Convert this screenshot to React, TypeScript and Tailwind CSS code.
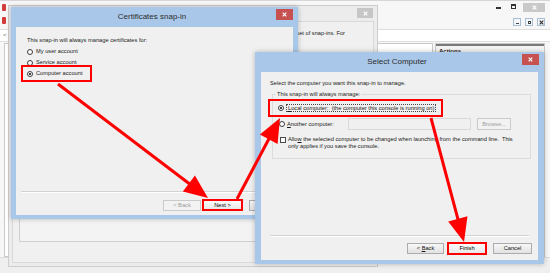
import type { ReactNode } from 'react'

function Radio({ checked = false }: { checked?: boolean }) {
  return (
    <span className="flex h-[6px] w-[6px] shrink-0 items-center justify-center rounded-full border border-[#3c3c3c] bg-white">
      {checked && <span className="h-[2px] w-[2px] rounded-full bg-black" />}
    </span>
  )
}

function CloseGlyph({ color = 'white' }: { color?: string }) {
  return (
    <svg width="5" height="5" viewBox="0 0 5 5">
      <path d="M0.7 0.7 L4.3 4.3 M4.3 0.7 L0.7 4.3" stroke={color} strokeWidth="1.2" />
    </svg>
  )
}

function Btn({ label, disabled = false, className = '' }: { label: ReactNode; disabled?: boolean; className?: string }) {
  return (
    <div
      className={`flex h-[11px] shrink-0 items-center justify-center border text-[5.7px] ${
        disabled
          ? 'border-[#cacaca] bg-[#f2f2f2] text-[#9d9d9d]'
          : 'border-[#acacac] bg-gradient-to-b from-[#f7f7f7] to-[#e2e2e2] text-[#111]'
      } ${className}`}
    >
      {label}
    </div>
  )
}

function Dialog({ title, className, children }: { title: string; className: string; children: ReactNode }) {
  return (
    <div className={`absolute flex flex-col bg-[#a9c8e9] shadow-[0_0_5px_rgba(0,0,0,0.25)] ${className}`}>
      <div className="flex h-[20px] shrink-0 items-start">
        <div className="flex-1" />
        <div className="self-center text-[8px] text-[#2b2b2b]">{title}</div>
        <div className="flex flex-1 justify-end pr-[5px] pt-[2px]">
          <div className="flex h-[11px] w-[17px] items-center justify-center bg-[#c75050]">
            <CloseGlyph />
          </div>
        </div>
      </div>
      {children}
    </div>
  )
}

function Arrows() {
  const arrows = [
    { x1: 58, y1: 84, x2: 208, y2: 198 },
    { x1: 237, y1: 199, x2: 280, y2: 118 },
    { x1: 431, y1: 118, x2: 464, y2: 242 },
  ]
  return (
    <svg className="pointer-events-none absolute left-0 top-0" width="550" height="273">
      {arrows.map((a, i) => {
        const dx = a.x2 - a.x1
        const dy = a.y2 - a.y1
        const len = Math.hypot(dx, dy)
        const ux = dx / len
        const uy = dy / len
        const L = 24
        const W = 10
        const bx = a.x2 - ux * L
        const by = a.y2 - uy * L
        const pts = `${a.x2},${a.y2} ${bx - uy * W},${by + ux * W} ${bx + uy * W},${by - ux * W}`
        return (
          <g key={i}>
            <line x1={a.x1} y1={a.y1} x2={bx + ux * 3} y2={by + uy * 3} stroke="#ff0000" strokeWidth="3" />
            <polygon points={pts} fill="#ff0000" />
          </g>
        )
      })}
    </svg>
  )
}

export default function App() {
  return (
    <div className="relative h-[273px] w-[550px] overflow-hidden bg-[#f0f0f0] font-['Liberation_Sans',Arial,sans-serif] text-[#1a1a1a]">
      {/* MMC main window behind everything */}
      <div className="flex h-full flex-col bg-[#f7f7f7]">
        <div className="flex h-[16px] shrink-0 items-start border-t border-[#d6d6d6]">
          <div className="ml-[2px] mt-[3px] h-[7px] w-[4px] rounded-[1px] bg-[#d23b3b]" />
          <div className="flex-1 pt-[3px] text-center text-[7px] leading-[8px] text-[#555]">Console1 - [Console Root]</div>
          <div className="flex items-start">
            <div className="mt-[6px] h-[1.5px] w-[5px] bg-[#333]" />
            <div className="ml-[10px] mt-[3px] h-[5px] w-[5px] border border-[#333] border-t-2" />
            <div className="ml-[7px] mr-[5px] mt-[2px] flex h-[9px] w-[22px] items-center justify-center bg-[#c9c9c9]">
              <CloseGlyph />
            </div>
          </div>
        </div>
        <div className="flex h-[13px] shrink-0 items-start">
          <div className="ml-[2px] mt-[1px] h-[7px] w-[4px] rounded-[1px] bg-[#d23b3b]" />
          <div className="flex-1" />
          <div className="mr-[5px] mt-[2px] flex gap-[4px]">
            <div className="flex h-[8px] w-[8px] items-end justify-center border border-[#a9bdd3] bg-[#f4f7fb] pb-[1px]">
              <div className="h-[1px] w-[3px] bg-[#444]" />
            </div>
            <div className="flex h-[8px] w-[8px] items-center justify-center border border-[#a9bdd3] bg-[#f4f7fb]">
              <div className="h-[3px] w-[3px] border border-[#444]" />
            </div>
            <div className="flex h-[8px] w-[8px] items-center justify-center border border-[#a9bdd3] bg-[#f4f7fb]">
              <CloseGlyph color="#333" />
            </div>
          </div>
        </div>
        <div className="flex h-[13px] shrink-0 items-center border-y border-[#dedede] bg-white pl-[3px] text-[6px] text-[#666]">
          &lt;
        </div>
        <div className="flex min-h-0 flex-1 pt-[1px]">
          <div className="ml-[4px] w-[369px] border border-[#c9c9c9] bg-white" />
          <div className="ml-[2px] w-[58px] border border-[#c9c9c9] bg-white" />
          <div className="ml-[2px] flex w-[110px] flex-col border border-[#c9c9c9] bg-white">
            <div className="border-t-2 border-[#7a7a7a] bg-[#f4f4f4] pl-[3px] text-[6px] font-bold leading-[10px] text-[#222]">
              Actions
            </div>
          </div>
        </div>
        <div className="h-[16px] shrink-0 border-t border-[#dcdcdc] bg-[#efefef]" />
      </div>

      {/* Add or Remove Snap-ins (inactive) */}
      <div className="absolute left-[8px] top-[5px] flex h-[262px] w-[370px] flex-col border border-[#cdcdcd] bg-[#ececec]">
        <div className="flex h-[15px] shrink-0 items-start justify-end pr-[4px] pt-[2px]">
          <div className="flex h-[10px] w-[16px] items-center justify-center bg-[#c6c6c6]">
            <CloseGlyph />
          </div>
        </div>
        <div className="mx-[3px] mb-[3px] flex flex-1 flex-col border border-[#d9d9d9] bg-[#f0f0f0]">
          <div className="flex justify-end whitespace-nowrap pr-[28px] pt-[8px] text-[5.7px] leading-[7px]">
            You can select snap-ins for this console from those available on your computer and configure the selected set of snap-ins. For
          </div>
          <div className="flex-1" />
          <div className="ml-[6px] mr-[8px] h-[30px] border border-[#cfcfcf] bg-[#f3f3f3]" />
          <div className="h-[20px]" />
        </div>
      </div>

      {/* Certificates snap-in */}
      <Dialog title="Certificates snap-in" className="left-[11px] top-[7px] h-[212px] w-[287px]">
        <div className="mx-[5px] mb-[4px] flex flex-1 flex-col bg-[#f0f0f0] px-[5px] text-[5.7px] leading-[7px]">
          <div className="mt-[10px] pl-[6px]">This snap-in will always manage certificates for:</div>
          <div className="mt-[2px] flex h-[11px] items-center gap-[3px] pl-[6px]">
            <Radio />
            My user account
          </div>
          <div className="flex h-[11px] items-center gap-[3px] pl-[6px]">
            <Radio />
            Service account
          </div>
          <div className="-mt-[3px] flex h-[17px] w-[71px] items-center gap-[3px] border-2 border-[#ff0000] pl-[4px]">
            <Radio checked />
            Computer account
          </div>
          <div className="mt-auto h-[2px] border-y border-b-white border-t-[#d3d3d3]" />
          <div className="mb-[4px] mt-[6px] flex items-center justify-end">
            <Btn label="< Back" disabled className="w-[38px]" />
            <div className="ml-[1px] flex h-[12px] w-[41px] border-2 border-[#ff0000]">
              <div className="flex flex-1 items-center justify-center bg-gradient-to-b from-[#fbfbfb] to-[#e8e8e8] text-[5.7px] text-black">
                Next &gt;
              </div>
            </div>
            <Btn label="Cancel" className="ml-[6px] w-[39px]" />
          </div>
        </div>
      </Dialog>

      {/* Select Computer */}
      <Dialog title="Select Computer" className="left-[255px] top-[52px] h-[212px] w-[289px]">
        <div className="mx-[6px] mb-[4px] flex flex-1 flex-col bg-[#f0f0f0] text-[5.7px] leading-[7px]">
          <div className="mt-[8px] pl-[9px]">Select the computer you want this snap-in to manage.</div>
          <fieldset className="ml-[11px] mr-[7px] mt-[4px] h-[68px] border border-[#dcdcdc]">
            <legend className="ml-[3px] px-[1px]">This snap-in will always manage:</legend>
            <div className="-ml-[5px] mt-[1px] flex h-[18px] w-[175px] items-center gap-[2px] border-2 border-[#ff0000] pl-[8px]">
              <Radio checked />
              <span className="whitespace-nowrap border border-dotted border-[#444] px-[1px] leading-[6px]">
                <u>L</u>ocal computer:&nbsp; (the computer this console is running on)
              </span>
            </div>
            <div className="mt-[1px] flex h-[12px] items-center pl-[6px]">
              <Radio />
              <span className="ml-[2px] w-[61px]">
                <u>A</u>nother computer:
              </span>
              <div className="h-[12px] w-[123px] border border-[#d9d9d9] bg-[#f0f0f0]" />
              <Btn label="Browse..." disabled className="ml-[6px] h-[12px] w-[34px]" />
            </div>
            <div className="mt-[6px] flex items-start gap-[2px] pl-[7px]">
              <span className="mt-[0.5px] h-[6px] w-[6px] shrink-0 border border-[#4a4a4a] bg-white" />
              <span className="whitespace-nowrap">
                Allo<u>w</u> the selected computer to be changed when launching from the command line.&nbsp; This
                <br />
                only applies if you save the console.
              </span>
            </div>
          </fieldset>
          <div className="mx-[9px] mt-auto h-[2px] border-y border-b-white border-t-[#d3d3d3]" />
          <div className="mb-[5px] mr-[6px] mt-[5px] flex h-[13px] items-center justify-end">
            <Btn label={<span>&lt; <u>B</u>ack</span>} className="w-[37px]" />
            <div className="ml-[3px] flex h-[13px] w-[40px] border-2 border-[#ff0000]">
              <div className="flex flex-1 items-center justify-center bg-gradient-to-b from-[#fbfbfb] to-[#e8e8e8] text-[5.7px] text-black">
                Finish
              </div>
            </div>
            <Btn label="Cancel" className="ml-[6px] w-[39px]" />
          </div>
        </div>
      </Dialog>

      <Arrows />
    </div>
  )
}
